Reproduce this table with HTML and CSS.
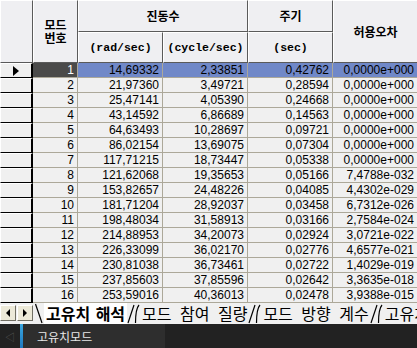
FILE: index.html
```html
<!DOCTYPE html>
<html lang="ko">
<head>
<meta charset="utf-8">
<link rel="stylesheet" href="styles.css">
</head>
<body>
<div class="app">
  <div class="grid">
    <table class="sheet">
      <colgroup>
        <col class="c-ind"><col class="c-no"><col class="c-val"><col class="c-val"><col class="c-val"><col class="c-val">
      </colgroup>
      <thead>
        <tr class="h1">
          <th class="corner" rowspan="2"></th>
          <th rowspan="2" class="two"><div>모드</div><div>번호</div></th>
          <th colspan="2">진동수</th>
          <th>주기</th>
          <th rowspan="2">허용오차</th>
        </tr>
        <tr class="h2">
          <th class="unit">(rad/sec)</th>
          <th class="unit">(cycle/sec)</th>
          <th class="unit">(sec)</th>
        </tr>
      </thead>
      <tbody>
        <tr class="sel"><td class="ind"><span class="arrow"></span></td><td class="no">1</td><td>14,69332</td><td>2,33851</td><td>0,42762</td><td>0,0000e+000</td></tr>
        <tr><td class="ind"></td><td>2</td><td>21,97360</td><td>3,49721</td><td>0,28594</td><td>0,0000e+000</td></tr>
        <tr><td class="ind"></td><td>3</td><td>25,47141</td><td>4,05390</td><td>0,24668</td><td>0,0000e+000</td></tr>
        <tr><td class="ind"></td><td>4</td><td>43,14592</td><td>6,86689</td><td>0,14563</td><td>0,0000e+000</td></tr>
        <tr><td class="ind"></td><td>5</td><td>64,63493</td><td>10,28697</td><td>0,09721</td><td>0,0000e+000</td></tr>
        <tr><td class="ind"></td><td>6</td><td>86,02154</td><td>13,69075</td><td>0,07304</td><td>0,0000e+000</td></tr>
        <tr><td class="ind"></td><td>7</td><td>117,71215</td><td>18,73447</td><td>0,05338</td><td>0,0000e+000</td></tr>
        <tr><td class="ind"></td><td>8</td><td>121,62068</td><td>19,35653</td><td>0,05166</td><td>7,4788e-032</td></tr>
        <tr><td class="ind"></td><td>9</td><td>153,82657</td><td>24,48226</td><td>0,04085</td><td>4,4302e-029</td></tr>
        <tr><td class="ind"></td><td>10</td><td>181,71204</td><td>28,92037</td><td>0,03458</td><td>6,7312e-026</td></tr>
        <tr><td class="ind"></td><td>11</td><td>198,48034</td><td>31,58913</td><td>0,03166</td><td>2,7584e-024</td></tr>
        <tr><td class="ind"></td><td>12</td><td>214,88953</td><td>34,20073</td><td>0,02924</td><td>3,0721e-022</td></tr>
        <tr><td class="ind"></td><td>13</td><td>226,33099</td><td>36,02170</td><td>0,02776</td><td>4,6577e-021</td></tr>
        <tr><td class="ind"></td><td>14</td><td>230,81038</td><td>36,73461</td><td>0,02722</td><td>1,4029e-019</td></tr>
        <tr><td class="ind"></td><td>15</td><td>237,85603</td><td>37,85596</td><td>0,02642</td><td>3,3635e-018</td></tr>
        <tr><td class="ind"></td><td>16</td><td>253,59016</td><td>40,36013</td><td>0,02478</td><td>3,9388e-015</td></tr>
      </tbody>
    </table>
  </div>
  <div class="tabbar">
    <div class="navbtn"><span class="tri-l"></span></div>
    <div class="navbtn"><span class="tri-r"></span></div>
    <svg class="edge" width="10" height="21" viewBox="0 0 10 21"><path d="M1.5 1 L8 20" stroke="#000" stroke-width="1.2" fill="none"/></svg>
    <div class="tab active">고유치 해석</div>
    <svg class="edge" width="14" height="21" viewBox="0 0 14 21"><path d="M1 20 L7 2 M12 2 Q8.5 6 8.5 20" stroke="#000" stroke-width="1.2" fill="none"/></svg>
    <div class="tab">모드 참여 질량</div>
    <svg class="edge" width="14" height="21" viewBox="0 0 14 21"><path d="M1 20 L7 2 M12 2 Q8.5 6 8.5 20" stroke="#000" stroke-width="1.2" fill="none"/></svg>
    <div class="tab">모드 방향 계수</div>
    <svg class="edge" width="14" height="21" viewBox="0 0 14 21"><path d="M1 20 L7 2 M12 2 Q8.5 6 8.5 20" stroke="#000" stroke-width="1.2" fill="none"/></svg>
    <div class="tab">고유치 모드</div>
  </div>
  <div class="status">
    <div class="back">◁</div>
    <div class="accent"></div>
    <div class="panel">고유치모드</div>
  </div>
</div>
</body>
</html>
```

FILE: styles.css
```css
html, body {
  margin: 0;
  padding: 0;
  width: 417px;
  height: 348px;
  overflow: hidden;
  background: #f0f0f0;
}

.app {
  width: 417px;
  height: 348px;
  display: flex;
  flex-direction: column;
  overflow: hidden;
}

.grid {
  height: 303px;
  overflow: hidden;
  flex: none;
}

.sheet {
  table-layout: fixed;
  border-collapse: separate;
  border-spacing: 0;
  width: 418px;
  font-family: "Liberation Sans", Arial, sans-serif;
  font-size: 12px;
}

.c-ind { width: 33px; }
.c-no { width: 45px; }
.c-val { width: 85px; }

.sheet th {
  box-sizing: border-box;
  background: #efeff2;
  border-top: 1px solid #ffffff;
  border-left: 1px solid #ffffff;
  border-right: 1px solid #5a5a5a;
  border-bottom: 1px solid #5a5a5a;
  padding: 0;
  font-family: "Noto Sans CJK KR", sans-serif;
  font-weight: bold;
  font-size: 12px;
  line-height: 16px;
  color: #000;
  text-align: center;
  vertical-align: middle;
  overflow: hidden;
}

.sheet th.two { line-height: 12px; padding-top: 1px; }
.sheet th.two div { height: 12px; margin: 0 0 1px; line-height: 12px; }

.h1 th { height: 32px; }
.h2 th { height: 31px; }

.sheet th.unit {
  font-family: "Liberation Mono", monospace;
  font-size: 11.5px;
}

.sheet td {
  box-sizing: border-box;
  height: 15px;
  padding: 0 3px 0 0;
  background: #f0f0f0;
  border-right: 1px solid #aca899;
  border-bottom: 1px solid #aca899;
  text-align: right;
  vertical-align: middle;
  line-height: 14px;
  color: #000;
  white-space: nowrap;
  overflow: hidden;
}

.sheet td.ind {
  background: #f0f0f0;
  border-top: 1px solid #ffffff;
  border-left: 1px solid #ffffff;
  border-right: 2px solid #000;
  border-bottom: 1px solid #000;
  padding: 0;
  text-align: left;
}

.sel td { background: #7088c8; }
.sel td.no { background: #4a4a4a; color: #fff; }

.arrow {
  display: block;
  width: 0;
  height: 0;
  margin-left: 12px;
  border-left: 6px solid #000;
  border-top: 5px solid transparent;
  border-bottom: 5px solid transparent;
}

.tabbar {
  height: 21px;
  flex: none;
  display: flex;
  align-items: stretch;
  background: #f0f0f0;
  font-family: "Noto Sans CJK KR", sans-serif;
  font-size: 16px;
  white-space: nowrap;
}

.navbtn {
  box-sizing: border-box;
  width: 16px;
  height: 16px;
  margin: 2px 1px 0 0;
  background: #ece9d8;
  border-top: 1px solid #fff;
  border-left: 1px solid #fff;
  border-right: 1px solid #716f64;
  border-bottom: 1px solid #716f64;
  display: flex;
  align-items: center;
  justify-content: center;
  flex: none;
}

.tri-l {
  width: 0; height: 0;
  border-right: 4px solid #000;
  border-top: 4px solid transparent;
  border-bottom: 4px solid transparent;
}

.tri-r {
  width: 0; height: 0;
  border-left: 4px solid #000;
  border-top: 4px solid transparent;
  border-bottom: 4px solid transparent;
}

.edge { flex: none; display: block; }

.tab {
  flex: none;
  padding: 0 1px;
  word-spacing: 4px;
  color: #000;
  height: 21px;
  line-height: 21px;
}

.tab.active { font-weight: bold; word-spacing: 1px; background: #fff; padding: 0 2px; }

.status {
  flex: 1;
  display: flex;
  background: #222222;
  font-family: "Noto Sans CJK KR", sans-serif;
  position: relative;
  z-index: 1;
}

.back {
  width: 20px;
  color: #555;
  font-size: 10px;
  display: flex;
  align-items: center;
  justify-content: center;
}

.accent {
  width: 3px;
  background: linear-gradient(#3aa7e0, #1e78c0);
}

.panel {
  width: 142px;
  background: #2e2e2e;
  color: #e8e8e8;
  font-size: 12px;
  padding-left: 14px;
  box-sizing: border-box;
  display: flex;
  align-items: center;
}
```
